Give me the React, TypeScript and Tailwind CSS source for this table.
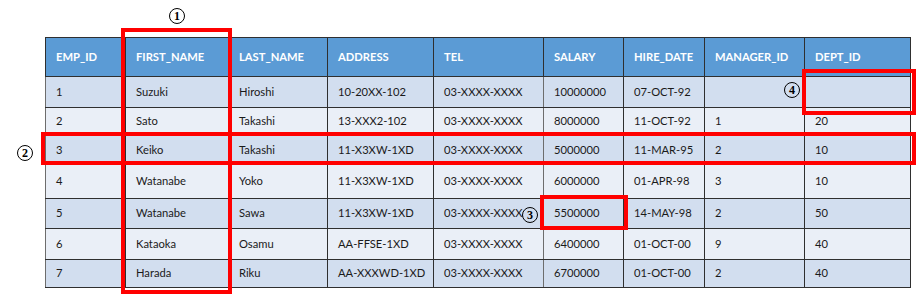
import React from 'react'

const headers = ['EMP_ID', 'FIRST_NAME', 'LAST_NAME', 'ADDRESS', 'TEL', 'SALARY', 'HIRE_DATE', 'MANAGER_ID', 'DEPT_ID']

const widths = ['w-[80px]', 'w-[103px]', 'w-[99px]', 'w-[106px]', 'w-[110px]', 'w-[80px]', 'w-[81px]', 'w-[100px]', 'w-[106px]']

const rows = [
    { h: 'h-[31px]', cells: ['1', 'Suzuki', 'Hiroshi', '10-20XX-102', '03-XXXX-XXXX', '10000000', '07-OCT-92', '', ''] },
    { h: 'h-[28px]', cells: ['2', 'Sato', 'Takashi', '13-XXX2-102', '03-XXXX-XXXX', '8000000', '11-OCT-92', '1', '20'] },
    { h: 'h-[29px]', cells: ['3', 'Keiko', 'Takashi', '11-X3XW-1XD', '03-XXXX-XXXX', '5000000', '11-MAR-95', '2', '10'] },
    { h: 'h-[34px]', cells: ['4', 'Watanabe', 'Yoko', '11-X3XW-1XD', '03-XXXX-XXXX', '6000000', '01-APR-98', '3', '10'] },
    { h: 'h-[30px]', cells: ['5', 'Watanabe', 'Sawa', '11-X3XW-1XD', '03-XXXX-XXXX', '5500000', '14-MAY-98', '2', '50'] },
    { h: 'h-[31px]', cells: ['6', 'Kataoka', 'Osamu', 'AA-FFSE-1XD', '03-XXXX-XXXX', '6400000', '01-OCT-00', '9', '40'] },
    { h: 'h-[28px]', cells: ['7', 'Harada', 'Riku', 'AA-XXXWD-1XD', '03-XXXX-XXXX', '6700000', '01-OCT-00', '2', '40'] },
]

// circled annotation numbers laid over the table
const Mark = ({ children, className }: { children: React.ReactNode, className: string }) => (
    <span className={`absolute w-[16px] h-[16px] rounded-full border-[1.5px] border-black flex items-center justify-center text-[12px] leading-none font-bold text-black ${className}`} style={{ fontFamily: '"Liberation Serif", serif' }}>{children}</span>
)

const App = () => {
    return (
        <div className="relative w-[919px] h-[297px] bg-white overflow-hidden" style={{ fontFamily: 'Lato, "Liberation Sans", sans-serif' }}>
            <div className="pt-[37px] pl-[45px]">
                <table className="border-collapse table-fixed text-[11.2px] text-[#1a1a1a] whitespace-nowrap">
                    <thead>
                        <tr className="h-[39px] bg-[#5b9bd5] text-white">
                            {headers.map((h, i) => (
                                <th key={h} className={`${widths[i]} text-left font-bold pl-[10px] pr-0 border border-[#2f2f2f]`}>{h}</th>
                            ))}
                        </tr>
                    </thead>
                    <tbody>
                        {rows.map((r, ri) => (
                            <tr key={ri} className={`${r.h} ${ri % 2 === 0 ? 'bg-[#d2deef]' : 'bg-[#eaeff7]'}`}>
                                {r.cells.map((c, ci) => (
                                    <td key={ci} className={`pl-[10px] pr-0 border-b border-[#2f2f2f] ${ci === 0 || ci === 8 ? 'border-x' : 'border-l'} ${ci === 0 || ci === 5 || ci === 1 ? 'border-l-[#6d6d6d]' : ''}`}>{c}</td>
                                ))}
                            </tr>
                        ))}
                    </tbody>
                </table>
            </div>

            {/* red marks */}
            <div className="absolute left-[121px] top-[28px] w-[111px] h-[266px] border-4 border-[#ff0000]" />
            <div className="absolute left-[41px] top-[132px] w-[875px] h-[33px] border-4 border-[#ff0000]" />
            <div className="absolute left-[540px] top-[195px] w-[88px] h-[35px] border-4 border-[#ff0000]" />
            <div className="absolute left-[802px] top-[69px] w-[114px] h-[46px] border-4 border-[#ff0000]" />

            <Mark className="left-[169px] top-[8px]">1</Mark>
            <Mark className="left-[17px] top-[145px]">2</Mark>
            <Mark className="left-[522px] top-[207px]">3</Mark>
            <Mark className="left-[784px] top-[82px]">4</Mark>
        </div>
    )
}

export default App
